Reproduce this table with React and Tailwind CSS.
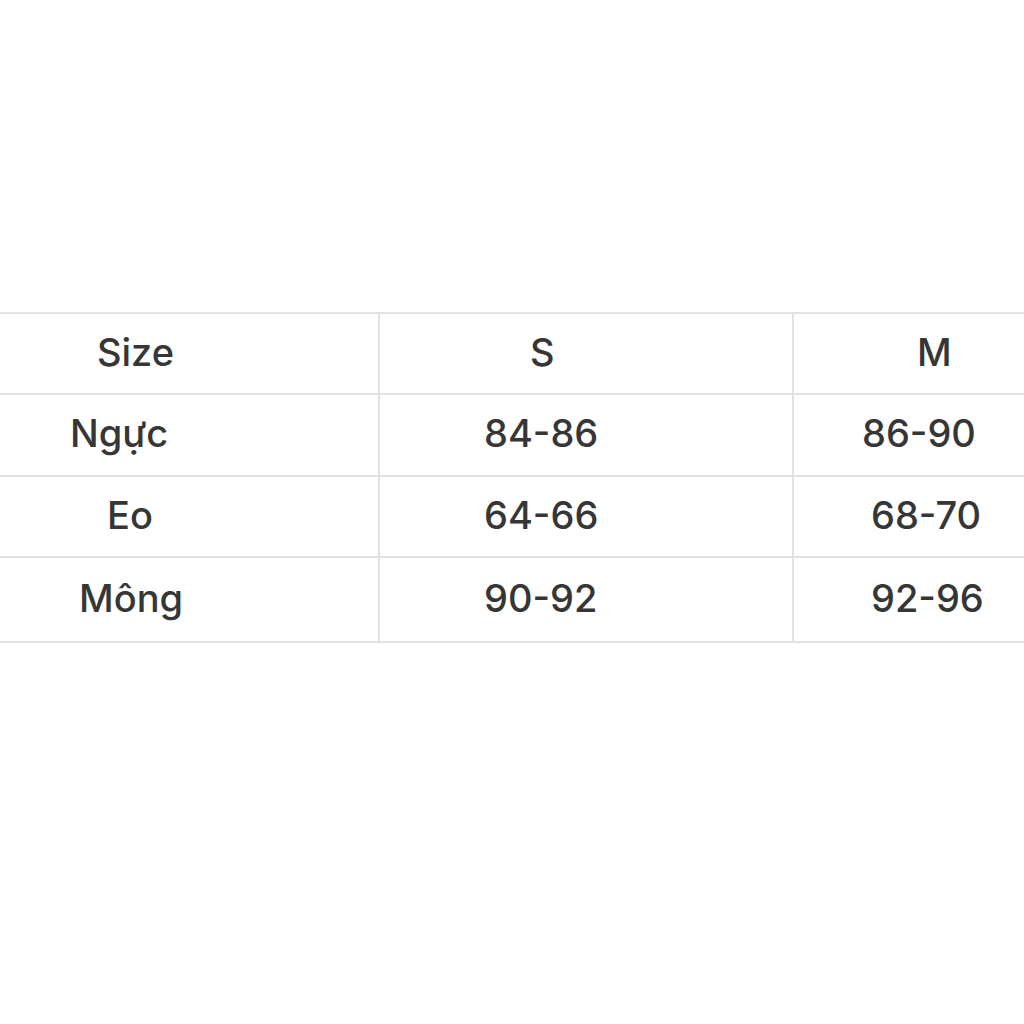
export default function App() {
  const rows = [
    { h: "h-[81px]", a: ["Size", "pl-[97px]"], b: ["S", "pl-[150px]"], c: ["M", "pl-[123px]"] },
    { h: "h-[82px]", a: ["Ngực", "pl-[70px]"], b: ["84-86", "pl-[104px]"], c: ["86-90", "pl-[68px]"] },
    { h: "h-[81px]", a: ["Eo", "pl-[107px]"], b: ["64-66", "pl-[104px]"], c: ["68-70", "pl-[77px]"] },
    { h: "h-[85px]", a: ["Mông", "pl-[79px]"], b: ["90-92", "pl-[104px]"], c: ["92-96", "pl-[77px]"] },
  ];
  return (
    <div className="w-[1024px] h-[1024px] bg-white pt-[312px] text-[#363636] text-[38px] font-medium leading-none" style={{ fontFamily: 'Inter, "Liberation Sans", Arial, sans-serif' }}>
      <div className="border-t-2 border-[#e2e2e2]">
        {rows.map((r, i) => (
          <div key={i} className={`flex border-b-2 border-[#e2e2e2] ${r.h}`}>
            <div className={`w-[378px] flex items-center ${r.a[1]}`}>
              <span className="pb-[4px]">{r.a[0]}</span>
            </div>
            <div className="w-[2px] bg-[#e2e2e2]" />
            <div className={`w-[412px] flex items-center ${r.b[1]}`}>
              <span className="pb-[4px]">{r.b[0]}</span>
            </div>
            <div className="w-[2px] bg-[#e2e2e2]" />
            <div className={`flex-1 flex items-center ${r.c[1]}`}>
              <span className="pb-[4px]">{r.c[0]}</span>
            </div>
          </div>
        ))}
      </div>
    </div>
  );
}
